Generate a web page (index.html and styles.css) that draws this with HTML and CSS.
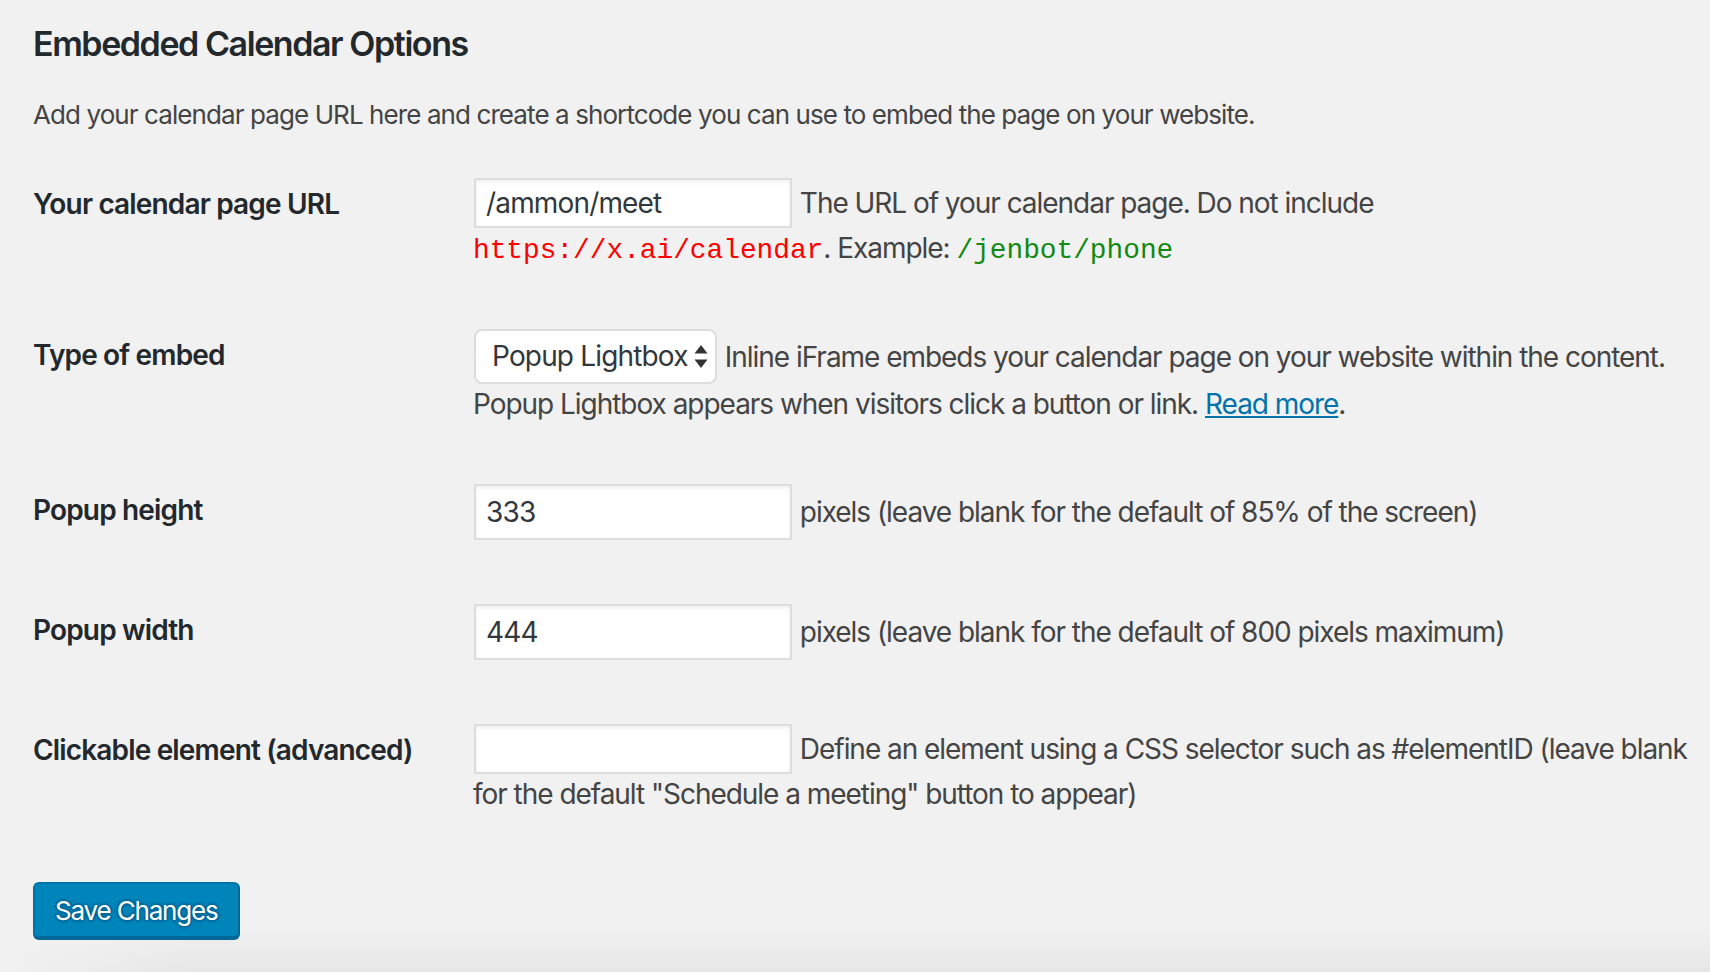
FILE: index.html
```html
<!DOCTYPE html>
<html lang="en">
<head>
<meta charset="utf-8">
<title>Embedded Calendar Options</title>
<link rel="stylesheet" href="styles.css">
</head>
<body>
<div class="wrap">
  <h2 class="title">Embedded Calendar Options</h2>
  <p class="intro">Add your calendar page URL here and create a shortcode you can use to embed the page on your website.</p>

  <div class="form-table">
    <div class="row">
      <div class="th">Your calendar page URL</div>
      <div class="td">
        <input type="text" class="text-input" value="/ammon/meet"> <span class="desc">The URL of your calendar page. Do not include</span><br><code class="bad">https://x.ai/calendar</code>. Example: <code class="good">/jenbot/phone</code>
      </div>
    </div>

    <div class="row">
      <div class="th">Type of embed</div>
      <div class="td">
        <span class="select-wrap"><select class="select"><option>Popup Lightbox</option><option>Inline iFrame</option></select><svg class="select-arrows" width="14" height="23" viewBox="0 0 14 23"><path d="M7 0 L13.5 8.5 H0.5 Z" fill="#333"/><path d="M7 23 L13.5 14.5 H0.5 Z" fill="#333"/></svg></span> Inline iFrame embeds your calendar page on your website within the content.<br>Popup Lightbox appears when visitors click a button or link. <a href="#" class="link">Read more</a>.
      </div>
    </div>

    <div class="row">
      <div class="th">Popup height</div>
      <div class="td">
        <input type="number" class="num-input" value="333"> pixels (leave blank for the default of 85% of the screen)
      </div>
    </div>

    <div class="row">
      <div class="th">Popup width</div>
      <div class="td">
        <input type="number" class="num-input" value="444"> pixels (leave blank for the default of 800 pixels maximum)
      </div>
    </div>

    <div class="row">
      <div class="th">Clickable element (advanced)</div>
      <div class="td">
        <input type="text" class="text-input" value=""> Define an element using a CSS selector such as #elementID (leave blank<br>for the default "Schedule a meeting" button to appear)
      </div>
    </div>
  </div>

  <p class="submit"><button type="button" class="button-primary">Save Changes</button></p>
</div>
</body>
</html>
```
FILE: styles.css
```css
html, body {
  margin: 0;
  padding: 0;
  height: 100%;
}
body {
  font-family: Inter, "Noto Sans", "Liberation Sans", sans-serif;
  font-size: 26px;
  color: #444;
  background:
    linear-gradient(90deg, #f1f1f1 0, rgba(241,241,241,0) 200px) left bottom / 240px 50px no-repeat,
    linear-gradient(180deg, #f1f1f1 0, #f1f1f1 925px, #e6e6e6 972px) no-repeat;
  background-color: #f1f1f1;
  overflow: hidden;
}
.wrap {
  padding: 0 20px 0 33px;
}
.title {
  font-size: 34px;
  font-weight: 600;
  letter-spacing: -0.042em;
  color: #23282d;
  line-height: 1.3;
  margin: 22px 0 0;
}
.intro {
  font-size: 26px;
  letter-spacing: -0.035em;
  line-height: 1.5;
  margin: 29px 0 0;
}
.form-table {
  margin-top: 12px;
  display: flex;
  flex-direction: column;
}
.row {
  display: grid;
  grid-template-columns: 420px 1fr;
}
.th {
  padding: 40px 20px 40px 0;
  font-size: 28px;
  font-weight: 600;
  letter-spacing: -0.03em;
  line-height: 1.3;
  color: #23282d;
}
.td {
  padding: 30px 20px 30px 20px;
  font-size: 28px;
  letter-spacing: -0.037em;
  line-height: 1.3;
  white-space: nowrap;
}
.text-input, .num-input {
  box-sizing: border-box;
  width: 318px;
  margin: 2px 1px;
  padding: 0 10px;
  border: 2px solid #ddd;
  box-shadow: inset 0 2px 4px rgba(0,0,0,.07);
  background: #fff;
  color: #32373c;
  font-family: inherit;
  font-size: 28px;
  letter-spacing: -0.03em;
  outline: none;
  -moz-appearance: textfield;
}
.text-input { height: 50px; }
.num-input { height: 56px; }
.num-input::-webkit-inner-spin-button,
.num-input::-webkit-outer-spin-button {
  -webkit-appearance: none;
  margin: 0;
}
code {
  font-family: "Liberation Mono", "DejaVu Sans Mono", monospace;
  font-size: 27.8px;
  line-height: 1;
  letter-spacing: 0;
}
.bad { color: #f00; }
.good { color: #118a11; }
.select-wrap {
  position: relative;
  display: inline-block;
  margin: 2px 1px;
}
.select {
  -webkit-appearance: none;
  appearance: none;
  box-sizing: border-box;
  width: 243px;
  height: 55px;
  padding: 0 26px 0 16px;
  border: 2px solid #ddd;
  border-radius: 8px;
  background: #fff;
  color: #32373c;
  font-family: inherit;
  font-size: 28px;
  letter-spacing: -0.03em;
  outline: none;
}
.select-arrows {
  position: absolute;
  right: 9px;
  top: 16px;
  pointer-events: none;
}
.link {
  color: #0073aa;
  text-decoration: underline;
}
.submit {
  margin: 40px 0 0;
  padding: 0;
}
.button-primary {
  box-sizing: border-box;
  height: 56px;
  padding: 0 20px;
  font-family: inherit;
  font-size: 26px;
  letter-spacing: -0.045em;
  color: #fff;
  background: #0085ba;
  border: 2px solid #0073aa;
  border-right-color: #006799;
  border-bottom-color: #006799;
  border-radius: 6px;
  box-shadow: 0 2px 0 #006799;
  text-shadow: 0 -2px 2px #006799, 2px 0 2px #006799, 0 2px 2px #006799, -2px 0 2px #006799;
  cursor: pointer;
}
```
